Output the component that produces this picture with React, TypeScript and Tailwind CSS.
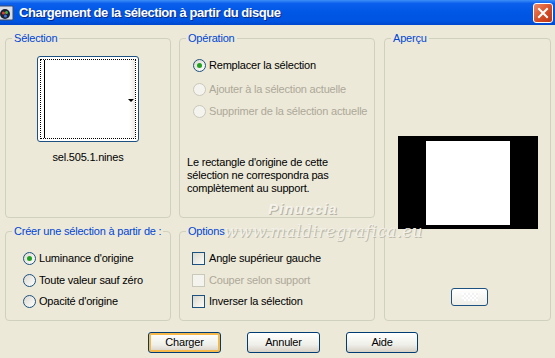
import React from "react"

function Radio({ checked = false, disabled = false }: { checked?: boolean; disabled?: boolean }) {
  return (
    <span
      className={`flex items-center justify-center w-[13px] h-[13px] rounded-full border shrink-0 ${
        disabled
          ? "border-[#cac8bb] bg-[#f4f3ee]"
          : "border-[#1c5180] bg-[linear-gradient(135deg,#dcd9cf,#ffffff)]"
      }`}
    >
      {checked && <span className="w-[5px] h-[5px] rounded-full bg-[#21a121]" />}
    </span>
  )
}

function Check({ disabled = false }: { disabled?: boolean }) {
  return (
    <span
      className={`block w-[13px] h-[13px] border shrink-0 ${
        disabled
          ? "border-[#cac8bb] bg-[#f4f3ee]"
          : "border-[#1c5180] bg-[linear-gradient(135deg,#dcd8cc,#fbfbf8)]"
      }`}
    />
  )
}

function Group({
  title,
  className,
  children,
}: {
  title: string
  className: string
  children?: React.ReactNode
}) {
  return (
    <fieldset className={`border border-[#d0d0bf] rounded-[4px] min-w-0 ${className}`}>
      <legend className="ml-[6px] px-[2px] text-[#0046d5] leading-[13px] whitespace-nowrap">{title}</legend>
      {children}
    </fieldset>
  )
}

function Button({ label, primary = false }: { label: string; primary?: boolean }) {
  return (
    <button
      className={`h-[21px] rounded-[3px] border border-[#003c74] bg-[linear-gradient(to_bottom,#ffffff,#f0f0ea_60%,#d6d0c5)] text-[11px] leading-none ${
        primary ? "shadow-[inset_0_0_0_2px_#f5b84a]" : ""
      }`}
    >
      {label}
    </button>
  )
}

export default function App() {
  return (
    <div className="relative w-[555px] h-[358px] overflow-hidden bg-[#ece9d8] text-[11px] tracking-[-0.2px] text-black font-['Liberation_Sans',Arial,sans-serif] whitespace-nowrap">
      {/* Barre de titre */}
      <div className="relative h-[25px] flex items-center bg-[linear-gradient(to_bottom,#3d8ef8_0%,#0b5fec_14%,#0057e5_50%,#0054e0_85%,#0048cc_100%)]">
        <svg width="16" height="16" viewBox="0 0 16 16" className="ml-[-2px] shrink-0">
          <rect x="1" y="1" width="14" height="14" rx="1" fill="#d8dde8" stroke="#3a4a6a" />
          <circle cx="7" cy="9" r="5" fill="#1c2230" />
          <circle cx="5.5" cy="8" r="1.6" fill="#e23b3b" />
          <circle cx="8.5" cy="7.5" r="1.5" fill="#3bb84a" />
          <circle cx="7.5" cy="11" r="1.5" fill="#3a78e8" />
        </svg>
        <span className="ml-[5px] text-white font-bold text-[13px] tracking-[-0.45px] [text-shadow:1px_1px_0_#0a2a8a]">
          Chargement de la sélection à partir du disque
        </span>
        <div className="absolute left-[533px] top-[3px] w-[20px] h-[20px] rounded-[3px] border border-white bg-[linear-gradient(135deg,#f08a64,#d34a22_60%,#b8361a)] flex items-center justify-center">
          <svg width="12" height="12" viewBox="0 0 12 12">
            <path d="M2 2 L10 10 M10 2 L2 10" stroke="white" strokeWidth="2" strokeLinecap="square" />
          </svg>
        </div>
      </div>

      <div className="flex pl-[5px] pt-[7px]">
        {/* Colonne gauche */}
        <div className="flex flex-col w-[166px] gap-[7px]">
          <Group title="Sélection" className="h-[186px]">
            <div className="flex flex-col items-center">
              <div className="mt-[11px] w-[102px] h-[86px] rounded-[3px] border border-[#1c5180] bg-white p-[2px]">
                <div className="relative flex h-full border border-dotted border-black">
                  <div className="ml-[3px] w-px bg-black" />
                  <div className="absolute right-0 top-0 bottom-0 w-[6px] bg-[linear-gradient(to_right,#ffffff,#ecebe6)]" />
                  <div className="absolute right-[1px] top-[39px] w-0 h-0 border-l-[3px] border-r-[3px] border-t-[3px] border-l-transparent border-r-transparent border-t-black" />
                </div>
              </div>
              <div className="mt-[9px] leading-[13px]">sel.505.1.nines</div>
            </div>
          </Group>

          <Group title="Créer une sélection à partir de :" className="h-[96px]">
            <div className="flex flex-col pl-[17px] pt-[14px] gap-[9px]">
              <div className="flex items-center gap-[3px] h-[13px]">
                <Radio checked />
                <span>Luminance d'origine</span>
              </div>
              <div className="flex items-center gap-[3px] h-[13px]">
                <Radio />
                <span>Toute valeur sauf zéro</span>
              </div>
              <div className="flex items-center gap-[3px] h-[13px] mt-[-1px]">
                <Radio />
                <span>Opacité d'origine</span>
              </div>
            </div>
          </Group>
        </div>

        {/* Colonne centrale */}
        <div className="ml-[8px] flex flex-col w-[196px] gap-[7px]">
          <Group title="Opération" className="h-[186px]">
            <div className="flex flex-col pl-[13px] pt-[14px]">
              <div className="flex items-center gap-[3px] h-[13px]">
                <Radio checked />
                <span>Remplacer la sélection</span>
              </div>
              <div className="flex items-center gap-[3px] h-[13px] mt-[11px] text-[#aca899]">
                <Radio disabled />
                <span>Ajouter à la sélection actuelle</span>
              </div>
              <div className="flex items-center gap-[3px] h-[13px] mt-[9px] text-[#aca899]">
                <Radio disabled />
                <span>Supprimer de la sélection actuelle</span>
              </div>
            </div>
            <p className="mt-[38px] pl-[7px] leading-[13px]">
              Le rectangle d'origine de cette
              <br />
              sélection ne correspondra pas
              <br />
              complètement au support.
            </p>
          </Group>

          <Group title="Options" className="h-[96px]">
            <div className="flex flex-col pl-[12px] pt-[14px] gap-[9px]">
              <div className="flex items-center gap-[4px] h-[13px]">
                <Check />
                <span>Angle supérieur gauche</span>
              </div>
              <div className="flex items-center gap-[4px] h-[13px] text-[#aca899]">
                <Check disabled />
                <span>Couper selon support</span>
              </div>
              <div className="flex items-center gap-[4px] h-[13px] mt-[-1px]">
                <Check />
                <span>Inverser la sélection</span>
              </div>
            </div>
          </Group>
        </div>

        {/* Colonne droite */}
        <div className="ml-[9px] w-[167px]">
          <Group title="Aperçu" className="h-[289px]">
            <div className="flex flex-col">
              <div className="mt-[91px] ml-[13px] w-[140px] h-[93px] bg-black pt-[5px] pl-[28px]">
                <div className="w-[84px] h-[84px] bg-white" />
              </div>
              <div className="mt-[59px] ml-[66px] w-[37px] h-[18px] rounded-[3px] border border-[#1c5180] bg-[linear-gradient(to_bottom,#ffffff,#efeee8)] flex items-center justify-center">
                <div className="w-[16px] h-[8px] bg-[repeating-conic-gradient(#f2f2f2_0_25%,#ffffff_0_50%)] bg-[length:4px_4px]" />
              </div>
            </div>
          </Group>
        </div>
      </div>

      {/* Boutons */}
      <div className="flex pl-[148px] mt-[11px] gap-[26px]">
        <div className="w-[73px] flex flex-col">
          <Button label="Charger" primary />
        </div>
        <div className="w-[73px] flex flex-col">
          <Button label="Annuler" />
        </div>
        <div className="w-[72px] flex flex-col">
          <Button label="Aide" />
        </div>
      </div>

      {/* Filigranes */}
      <div className="absolute left-[268px] top-[198px] text-[15px] font-bold italic tracking-[1px] text-[#f4f2ea] [text-shadow:1px_1px_0_#b5b2a4] pointer-events-none">
        Pinuccia
      </div>
      <div className="absolute left-[224px] top-[220px] text-[16px] italic tracking-[0.5px] text-[#f2f0e8] [text-shadow:1px_1px_0_#bdbaab] pointer-events-none font-['DejaVu_Serif',serif]">
        www.maldiregrafica.eu
      </div>
    </div>
  )
}
